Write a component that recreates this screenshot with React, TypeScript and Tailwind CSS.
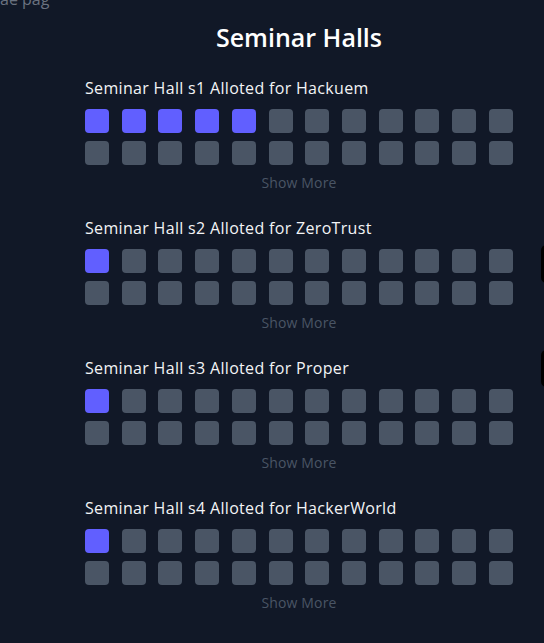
import React from 'react';

const halls = [
  { id: 's1', team: 'Hackuem', booked: 5 },
  { id: 's2', team: 'ZeroTrust', booked: 1 },
  { id: 's3', team: 'Proper', booked: 1 },
  { id: 's4', team: 'HackerWorld', booked: 1 },
];

export default function App() {
  return (
    <div className="relative h-[643px] overflow-hidden bg-[#111827] font-['Open_Sans',sans-serif]">
      <div className="-mt-[11px] h-[16px] text-[16px] leading-[20px] text-[#6b7280]">ae pag</div>

      <div className="ml-[85px] w-[428px]">
        <h1 className="mt-[16px] text-center text-[25px] leading-[32px] font-semibold text-white">
          Seminar Halls
        </h1>

        <div className="mt-[25px] flex flex-col gap-[25px]">
          {halls.map((h) => (
            <HallBlock key={h.id} id={h.id} team={h.team} booked={h.booked} />
          ))}
        </div>
      </div>

      {/* side tabs cut off at the right edge */}
      <div className="absolute right-[-8px] top-[245px] h-[38px] w-[11px] rounded-md bg-black" />
      <div className="absolute right-[-8px] top-[350px] h-[37px] w-[11px] rounded-md bg-black" />
    </div>
  );
}

function HallBlock({ id, team, booked }: { id: string; team: string; booked: number }) {
  const slots = Array.from({ length: 24 }, (_, i) => i);
  return (
    <div>
      <h2 className="text-[16px] leading-[20px] font-medium tracking-[0.02em] text-gray-100">
        Seminar Hall {id} Alloted for {team}
      </h2>
      <div className="mt-[11px] grid gap-y-2 justify-between" style={{ gridTemplateColumns: 'repeat(12, 24px)' }}>
        {slots.map((i) => (
          <div
            key={i}
            className={`h-6 w-6 rounded-sm ${i < booked ? 'bg-indigo-500' : 'bg-gray-600'}`}
          />
        ))}
      </div>
      <button className="mt-2 block w-full text-center text-[14px] leading-[20px] tracking-[0.01em] text-gray-600">
        Show More
      </button>
    </div>
  );
}
